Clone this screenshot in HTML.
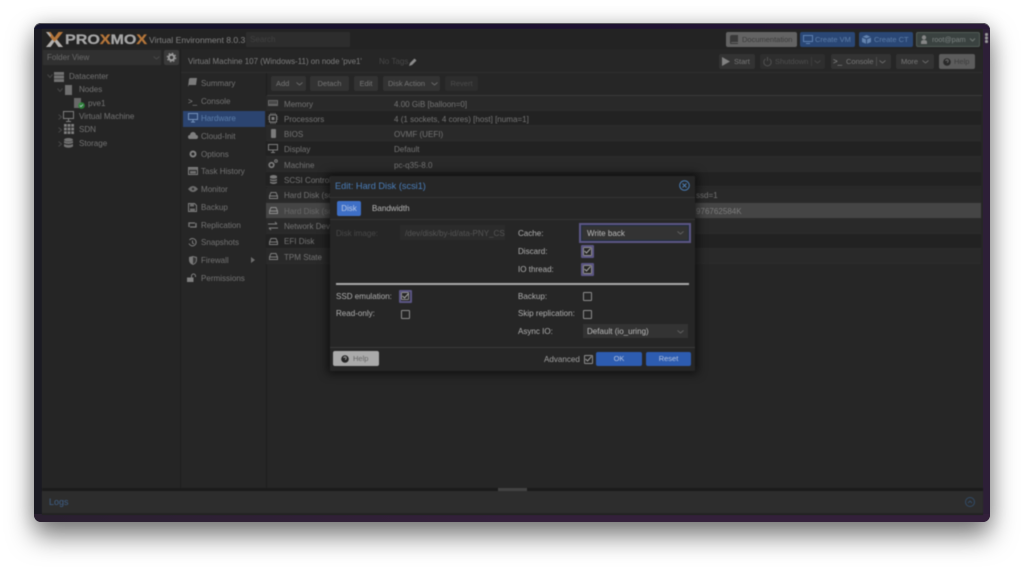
<!DOCTYPE html>
<html><head><meta charset="utf-8">
<style>
html,body{margin:0;padding:0;width:1024px;height:567px;overflow:hidden;background:#fff;font-family:"Liberation Sans",sans-serif}
#win{position:absolute;left:34px;top:23px;width:956px;height:499px;border-radius:7px;background:linear-gradient(90deg,#1a1a22,#211a2e 50%,#2d1f37);box-shadow:0 14px 26px 0 rgba(0,0,0,.5),0 0 18px rgba(0,0,0,.16)}
#wb{position:absolute;left:34px;top:23px;width:956px;height:499px;border-radius:7px;overflow:hidden;background:linear-gradient(90deg,#13132a,#1c1030 50%,#2a1a38) top/100% 6px no-repeat,linear-gradient(90deg,#2a2030,#33203a 50%,#33203a) bottom/100% 8px no-repeat;box-shadow:inset 0 1px 0 #5a5a5e}
#in{position:absolute;left:42px;top:29px;width:941px;height:486px;background:#262626}
#p{position:absolute;left:0;top:0;width:1024px;height:567px;filter:blur(.45px)}
.t{position:absolute;white-space:nowrap;font-size:8.05px;line-height:12px;color:#747474;margin-top:1px}
.b{position:absolute;border-radius:2px;background:#333;color:#777;font-size:7.5px;line-height:15px;white-space:nowrap;text-align:center}
.r{position:absolute;left:266px;width:715px;height:15.3px;border-bottom:1px solid #2c2c2c;box-sizing:border-box}
svg{position:absolute;overflow:visible;opacity:.88}
.ck{position:absolute;width:6.5px;height:6.500px;border:1px solid #8d8d8d;border-radius:1px}
.hl{position:absolute;border:2px solid #5c5685;border-radius:1px;width:9px;height:9px}
</style></head><body>
<div id="win"></div><div id="wb"></div><div id="in"></div>
<div id="p">
<!-- header -->
<div style="position:absolute;left:42px;top:29px;width:940px;height:20px;background:#232323"></div>
<svg style="left:45px;top:31px;opacity:1" width="19" height="17" viewBox="0 0 19 17"><path d="M1 1h4.500l4 5.500 4-5.500H18l-6 7.500 6 7.500h-4.500l-4-5.500-4 5.500H1l6-7.500z" fill="#b5763a"/><path d="M1 16h4.500l4-5.500-2.300-2zM18 16h-4.500l-4-5.500 2.300-2zM1 1h2.500L6 4.500 5 6z" fill="#b0b0b0"/></svg>
<div class="t" style="left:65px;top:31px;font-size:13.500px;line-height:16px;font-weight:bold;-webkit-text-stroke:.25px;color:#a6a6a6;transform:scaleX(1.19);transform-origin:left">PRO<span style="color:#b5763a">X</span>MO<span style="color:#b5763a">X</span></div>
<div class="t" style="left:149px;top:33px;font-size:8.600px;color:#828282">Virtual Environment 8.0.3</div>
<div style="position:absolute;left:246px;top:32px;width:104px;height:15px;background:#2d2d2d;border-radius:1px"></div>
<div class="t" style="left:250px;top:33px;color:#414141">Search</div>
<div class="b" style="left:726px;top:32px;width:71px;height:15px;background:#636363;color:#3b3b3b;text-align:left;text-indent:16px;font-size:7.500px">Documentation</div>
<svg style="left:730px;top:35px" width="8" height="9"><path d="M2 0h6v7H2q-1 0-1 1h7v1H1Q0 9 0 8V2q0-2 2-2z" fill="#333"/></svg>
<div class="b" style="left:800px;top:32px;width:55px;height:15px;background:#2a4775;color:#5c7da8;text-align:left;text-indent:15px;font-size:7.500px">Create VM</div>
<svg style="left:803px;top:35px" width="10" height="9"><path d="M.5.500h9v6h-9zM3 8.500h4" stroke="#6488b8" fill="none"/></svg>
<div class="b" style="left:859px;top:32px;width:54px;height:15px;background:#2a4775;color:#5c7da8;text-align:left;text-indent:15px;font-size:7.500px">Create CT</div>
<svg style="left:862px;top:35px" width="9" height="9"><path d="M4.500 0 9 2v5L4.500 9 0 7V2z" fill="#6b8cb8"/><path d="M0 2l4.500 2L9 2M4.500 4v5" stroke="#2a4775" fill="none"/></svg>
<div class="b" style="left:916px;top:32px;width:64px;height:15px;background:#3a4240;border:1px solid #505a56;box-sizing:border-box;color:#7b8280;text-align:left;text-indent:15px;line-height:13px;font-size:7.200px">root@pam</div>
<svg style="left:920px;top:35px" width="8" height="9"><circle cx="4" cy="2.500" r="2.200" fill="#909090"/><path d="M1 9V7q0-2 3-2t3 2v2z" fill="#909090"/></svg>
<svg style="left:969px;top:38px" width="7" height="4"><path d="M1 .500l2.500 2.500L6 .500" stroke="#767e7a" fill="none"/></svg>
<div style="position:absolute;left:985px;top:33px;width:3px;height:2.500px;background:#999;box-shadow:0 3.500px #999,0 7px #999;border-radius:1px"></div>

<!-- left tree -->
<div style="position:absolute;left:42px;top:49px;width:138px;height:441px;background:#252525"></div>
<div style="position:absolute;left:180px;top:49px;width:1px;height:441px;background:#1e1e1e"></div>
<div style="position:absolute;left:43px;top:50px;width:118px;height:15px;background:#303030"></div>
<div class="t" style="left:47px;top:51px;color:#6a6a6a">Folder View</div>
<svg style="left:153px;top:56px" width="7" height="4"><path d="M.5.500 3.500 3l3-2.500" stroke="#4c4c4c" fill="none"/></svg>
<div class="b" style="left:164px;top:50px;width:15px;height:15px;background:#3a3a3a"></div>
<svg style="left:167px;top:53px" width="9" height="9"><circle cx="4.500" cy="4.500" r="2.700" fill="none" stroke="#aaa" stroke-width="2"/><circle cx="4.500" cy="4.500" r="4.300" fill="none" stroke="#aaa" stroke-width="1" stroke-dasharray="1.700 1.700"/></svg>

<svg style="left:47px;top:74px" width="6" height="5"><path d="M.5.500 3 3.500 5.500.500" stroke="#4c4c4c" fill="none"/></svg>
<svg style="left:54px;top:72px" width="10" height="10"><path d="M0 0h10v3H0zM0 3.500h10v3H0zM0 7h10v3H0z" fill="#7c7c7c"/></svg>
<div class="t" style="left:69px;top:70px">Datacenter</div>
<svg style="left:57px;top:88px" width="6" height="5"><path d="M.5.500 3 3.500 5.500.500" stroke="#4c4c4c" fill="none"/></svg>
<div style="position:absolute;left:65px;top:85px;width:7px;height:10px;background:#707070"></div>
<div class="t" style="left:79px;top:83px">Nodes</div>
<div style="position:absolute;left:74px;top:98px;width:7px;height:10px;background:#686868"></div>
<svg style="left:78px;top:102px" width="7" height="7"><circle cx="3.500" cy="3.500" r="3.300" fill="#2f8a3a"/><path d="M2 3.500l1 1 2-2" stroke="#cde" fill="none" stroke-width=".8"/></svg>
<div class="t" style="left:88px;top:97px">pve1</div>
<svg style="left:58px;top:114px" width="5" height="6"><path d="M.5.500 3.500 3 .5 5.500" stroke="#4c4c4c" fill="none"/></svg>
<svg style="left:63px;top:111px" width="12" height="11"><path d="M.5.500h10v7H.5z" stroke="#8a8a8a" fill="none"/><path d="M3 10h5v1H3z" fill="#8a8a8a"/><path d="M5 8h1v2H5z" fill="#8a8a8a"/></svg>
<div class="t" style="left:79px;top:110px">Virtual Machine</div>
<svg style="left:58px;top:127px" width="5" height="6"><path d="M.5.500 3.500 3 .5 5.500" stroke="#4c4c4c" fill="none"/></svg>
<svg style="left:64px;top:124px" width="10" height="10"><path d="M0 0h2.800v2.800H0zM3.600 0h2.800v2.800H3.600zM7.200 0H10v2.800H7.200zM0 3.600h2.800v2.800H0zM3.600 3.600h2.800v2.800H3.600zM7.200 3.600H10v2.800H7.200zM0 7.200h2.800V10H0zM3.600 7.200h2.800V10H3.600zM7.200 7.200H10V10H7.200z" fill="#8c8c8c"/></svg>
<div class="t" style="left:79px;top:123px">SDN</div>
<svg style="left:58px;top:141px" width="5" height="6"><path d="M.5.500 3.500 3 .5 5.500" stroke="#4c4c4c" fill="none"/></svg>
<svg style="left:64px;top:138px" width="9" height="11"><ellipse cx="4.500" cy="1.800" rx="4.500" ry="1.800" fill="#7c7c7c"/><path d="M0 3q4.500 2 9 0v2q-4.500 2-9 0zM0 6q4.500 2 9 0v2.500q-4.500 2.500-9 0z" fill="#7c7c7c"/></svg>
<div class="t" style="left:79px;top:137px">Storage</div>

<!-- title bar -->
<div class="t" style="left:188px;top:55px;color:#7e7e7e;font-size:7.950px">Virtual Machine 107 (Windows-11) on node 'pve1'</div>
<div class="t" style="left:379px;top:55px;color:#484848">No Tags</div>
<svg style="left:409px;top:58px" width="8" height="8"><path d="M0 8l1-3L5.500.5l2 2L3 7z" fill="#9a9a9a"/></svg>
<div style="position:absolute;left:181px;top:72px;width:801px;height:1px;background:#303030"></div>
<div class="b" style="left:719px;top:54px;width:36px;height:15px;text-align:left;text-indent:15px">Start</div>
<svg style="left:722px;top:57px" width="8" height="9"><path d="M0 0l8 4.500L0 9z" fill="#8c8c8c"/></svg>
<div class="b" style="left:760px;top:54px;width:65px;height:15px;background:#2e2e2e;color:#4e4e4e;text-align:left;text-indent:15px">Shutdown</div>
<svg style="left:763px;top:57px" width="9" height="9"><path d="M2.500 2a3.700 3.700 0 1 0 4 0M4.500 0v4" stroke="#555" fill="none"/></svg>
<div style="position:absolute;left:811px;top:57px;width:1px;height:9px;background:#3c3c3c"></div>
<svg style="left:814px;top:60px" width="7" height="4"><path d="M.5.500l3 2.500 3-2.500" stroke="#4a4a4a" fill="none"/></svg>
<div class="b" style="left:831px;top:54px;width:60px;height:15px;text-align:left;text-indent:15px">Console</div>
<div class="t" style="left:833px;top:55px;font-size:8px;color:#909090">&gt;_</div>
<div style="position:absolute;left:876px;top:57px;width:1px;height:9px;background:#4d4d4d"></div>
<svg style="left:879px;top:60px" width="7" height="4"><path d="M.5.500l3 2.500 3-2.500" stroke="#707070" fill="none"/></svg>
<div class="b" style="left:896px;top:54px;width:38px;height:15px;text-align:left;text-indent:5px">More</div>
<svg style="left:922px;top:60px" width="7" height="4"><path d="M.5.500l3 2.500 3-2.500" stroke="#707070" fill="none"/></svg>
<div class="b" style="left:939px;top:54px;width:36px;height:15px;background:#5c5c5c;color:#3d3d3d;text-align:left;text-indent:15px">Help</div>
<svg style="left:943px;top:58px" width="8" height="8"><circle cx="4" cy="4" r="3.800" fill="#222"/><path d="M2.800 3q0-1.200 1.200-1.200T5.200 3 4 4.500" stroke="#777" fill="none" stroke-width=".8"/></svg>

<!-- nav -->
<div style="position:absolute;left:266px;top:73px;width:1px;height:417px;background:#1f1f1f"></div>
<div style="position:absolute;left:183px;top:111px;width:82px;height:16px;background:#2b4470"></div>
<div class="t" style="left:201px;top:77px">Summary</div>
<div class="t" style="left:201px;top:95px">Console</div>
<div class="t" style="left:201px;top:112px;color:#5c7eaa">Hardware</div>
<div class="t" style="left:201px;top:130px">Cloud-Init</div>
<div class="t" style="left:201px;top:148px">Options</div>
<div class="t" style="left:201px;top:165px">Task History</div>
<div class="t" style="left:201px;top:183px">Monitor</div>
<div class="t" style="left:201px;top:201px">Backup</div>
<div class="t" style="left:201px;top:219px">Replication</div>
<div class="t" style="left:201px;top:236px">Snapshots</div>
<div class="t" style="left:201px;top:254px">Firewall</div>
<div class="t" style="left:201px;top:272px">Permissions</div>
<svg style="left:188px;top:78px" width="9" height="9"><path d="M2 0h7L8 7H1L0 9h7L6 9H0L1 1z" fill="#888"/></svg>
<div class="t" style="left:188px;top:95px;font-size:8px;color:#8c8c8c">&gt;_</div>
<svg style="left:188px;top:113px" width="10" height="10"><path d="M.5.500h9v6h-9zM3 9h4M5 7v2" stroke="#7e9cc4" fill="none"/></svg>
<svg style="left:188px;top:132px" width="10" height="7"><path d="M2 7a2 2 0 0 1 0-4 3 3 0 0 1 6 0 2 2 0 0 1 0 4z" fill="#8c8c8c"/></svg>
<svg style="left:189px;top:150px" width="8" height="8"><circle cx="4" cy="4" r="2.500" fill="none" stroke="#8c8c8c" stroke-width="2"/></svg>
<svg style="left:188px;top:167px" width="10" height="8"><path d="M.5.500h9v7h-9z" fill="none" stroke="#8c8c8c"/><path d="M1 1h8v2H1zM2 4h6v2.500H2z" fill="#7c7c7c"/></svg>
<svg style="left:188px;top:186px" width="10" height="6"><path d="M0 3q5-6 10 0-5 6-10 0z" fill="#777"/><circle cx="5" cy="3" r="1.200" fill="#333"/></svg>
<svg style="left:188px;top:203px" width="9" height="9"><path d="M.5.500h6l2 2v6h-8z" fill="none" stroke="#8c8c8c"/><path d="M2 .5h4v3H2zM2 5.500h5v3H2z" fill="#777"/></svg>
<svg style="left:187px;top:221px" width="11" height="8"><path d="M2 6V2h6M9 2v4H3" stroke="#888" stroke-width="1.300" fill="none"/></svg>
<svg style="left:188px;top:238px" width="9" height="9"><path d="M1.500 2A3.700 3.700 0 1 1 1 5.500M4.500 2.500v2.500l1.500 1" stroke="#8c8c8c" fill="none"/></svg>
<svg style="left:189px;top:256px" width="8" height="9"><path d="M0 1l4-1 4 1v3q0 3.500-4 5-4-1.500-4-5z" fill="#868686"/><path d="M4 1v7q3-1.200 3-4V2z" fill="#3a3a3a"/></svg>
<svg style="left:251px;top:257px" width="4" height="6"><path d="M0 0l4 3-4 3z" fill="#777"/></svg>
<svg style="left:187px;top:274px" width="10" height="8"><rect x="0" y="3.500" width="6.500" height="4.500" fill="#8c8c8c"/><path d="M4.500 3.500V2a2 2 0 0 1 4 0v1" stroke="#8c8c8c" fill="none"/></svg>

<!-- toolbar -->
<div style="position:absolute;left:267px;top:95px;width:715px;height:1px;background:#393939"></div>
<div class="b" style="left:271px;top:76px;width:35px;height:15px;text-align:left;text-indent:5px">Add</div>
<svg style="left:296px;top:82px" width="7" height="4"><path d="M.5.500l3 2.500 3-2.500" stroke="#707070" fill="none"/></svg>
<div class="b" style="left:310px;top:76px;width:39px;height:15px">Detach</div>
<div class="b" style="left:354px;top:76px;width:24px;height:15px">Edit</div>
<div class="b" style="left:383px;top:76px;width:57px;height:15px;text-align:left;text-indent:5px">Disk Action</div>
<svg style="left:431px;top:82px" width="7" height="4"><path d="M.5.500l3 2.500 3-2.500" stroke="#707070" fill="none"/></svg>
<div class="b" style="left:445px;top:76px;width:33px;height:15px;background:#2d2d2d;color:#4c4c4c">Revert</div>

<!-- table rows -->
<div class="r" style="top:96px;background:#292929"></div>
<div class="r" style="top:111px;background:#222"></div>
<div class="r" style="top:126px;background:#292929"></div>
<div class="r" style="top:142px;background:#222"></div>
<div class="r" style="top:157px;background:#292929"></div>
<div class="r" style="top:172px;background:#222"></div>
<div class="r" style="top:188px;background:#292929"></div>
<div class="r" style="top:203px;height:16px;background:#454545"></div>
<div class="r" style="top:219px;background:#292929"></div>
<div class="r" style="top:234px;background:#222"></div>
<div class="r" style="top:249px;background:#292929"></div>
<div class="t" style="left:284px;top:98px">Memory</div>
<div class="t" style="left:284px;top:113px">Processors</div>
<div class="t" style="left:284px;top:128px">BIOS</div>
<div class="t" style="left:284px;top:143px">Display</div>
<div class="t" style="left:284px;top:159px">Machine</div>
<div class="t" style="left:284px;top:174px">SCSI Controller</div>
<div class="t" style="left:284px;top:189px">Hard Disk (scsi0)</div>
<div class="t" style="left:284px;top:205px;color:#686868">Hard Disk (scsi1)</div>
<div class="t" style="left:284px;top:220px">Network Device</div>
<div class="t" style="left:284px;top:235px">EFI Disk</div>
<div class="t" style="left:284px;top:251px">TPM State</div>
<div class="t" style="left:394px;top:98px">4.00 GiB [balloon=0]</div>
<div class="t" style="left:394px;top:113px">4 (1 sockets, 4 cores) [host] [numa=1]</div>
<div class="t" style="left:394px;top:128px">OVMF (UEFI)</div>
<div class="t" style="left:394px;top:143px">Default</div>
<div class="t" style="left:394px;top:159px">pc-q35-8.0</div>
<div class="t" style="left:696px;top:189px">ssd=1</div>
<div class="t" style="left:696px;top:205px;color:#7c7c7c">976762584K</div>
<svg style="left:268px;top:100px" width="10" height="6"><path d="M0 0h10v6H0z" fill="#6e6e6e"/><path d="M2 1v3M4 1v3M6 1v3M8 1v3" stroke="#2b2b2b"/></svg>
<svg style="left:268px;top:113px" width="10" height="11"><rect x="1.500" y="2" width="7" height="7" fill="none" stroke="#888"/><rect x="3.500" y="4" width="3" height="3" fill="#888"/><path d="M3 0v2M5 0v2M7 0v2M3 9v2M5 9v2M7 9v2M0 4h1M0 6h1M9 4h1M9 6h1" stroke="#777"/></svg>
<div style="position:absolute;left:271px;top:129px;width:5px;height:9px;background:#7c7c7c;border-radius:1px"></div>
<svg style="left:268px;top:144px" width="10" height="9"><path d="M.5.500h9v5.500h-9zM3 8.500h4M5 6v2" stroke="#8a8a8a" fill="none"/></svg>
<svg style="left:268px;top:159px" width="10" height="10"><circle cx="3.500" cy="6" r="2.300" fill="none" stroke="#8a8a8a" stroke-width="1.600"/><circle cx="8" cy="2" r="1.300" fill="none" stroke="#8a8a8a"/></svg>
<svg style="left:270px;top:175px" width="7" height="9"><path d="M0 1q3.500-2 7 0v7q-3.500 2-7 0z" fill="#868686"/><path d="M0 3.500q3.500 1.500 7 0M0 6q3.500 1.500 7 0" stroke="#2a2a2a" fill="none"/></svg>
<svg style="left:269px;top:192px" width="9" height="7"><path d="M.5 4 2 .5h5L8.500 4v2.500h-8zM.5 4h8" stroke="#8a8a8a" fill="none"/></svg>
<svg style="left:269px;top:207px" width="9" height="7"><path d="M.5 4 2 .5h5L8.500 4v2.500h-8zM.5 4h8" stroke="#9a9a9a" fill="none"/></svg>
<svg style="left:268px;top:222px" width="10" height="8"><path d="M0 2h9M7 0l2 2M10 6H1M3 8 1 6" stroke="#8a8a8a" fill="none"/></svg>
<svg style="left:269px;top:238px" width="9" height="7"><path d="M.5 4 2 .5h5L8.500 4v2.500h-8zM.5 4h8" stroke="#8a8a8a" fill="none"/></svg>
<svg style="left:269px;top:253px" width="9" height="7"><path d="M.5 4 2 .5h5L8.500 4v2.500h-8zM.5 4h8" stroke="#8a8a8a" fill="none"/></svg>

<!-- logs -->
<div style="position:absolute;left:42px;top:488px;width:941px;height:3px;background:#1b1b1b"></div>
<div style="position:absolute;left:498px;top:488px;width:29px;height:3px;background:#424242"></div>
<div style="position:absolute;left:42px;top:491px;width:941px;height:24px;background:#2d2d2d;border-bottom:2px solid #232323;box-sizing:border-box"></div>
<div class="t" style="left:49px;top:495px;font-size:9px;color:#3f5f87">Logs</div>
<svg style="left:965px;top:497px" width="10" height="10"><circle cx="5" cy="5" r="4.500" fill="none" stroke="#33506f"/><path d="M3 6l2-2 2 2" fill="none" stroke="#33506f"/></svg>

<!-- dialog -->
<div style="position:absolute;left:330px;top:176px;width:365px;height:195px;background:#262626;box-shadow:0 0 9px 3px rgba(0,0,0,.55);border-radius:1px"></div>
<div class="t" style="left:335px;top:179px;font-size:9.200px;color:#4a7db8">Edit: Hard Disk (scsi1)</div>
<svg style="left:679px;top:180px" width="11" height="11"><circle cx="5.500" cy="5.500" r="4.800" fill="none" stroke="#4f8ac9"/><path d="M3.500 3.500l4 4M7.500 3.500l-4 4" stroke="#4f8ac9"/></svg>
<div style="position:absolute;left:330px;top:197px;width:365px;height:1px;background:#343434"></div>
<div style="position:absolute;left:330px;top:219px;width:365px;height:1px;background:#343434"></div>
<div class="b" style="left:337px;top:201px;width:24px;height:15px;background:#3e6fc6;color:#b9c8e6;font-size:8px">Disk</div>
<div class="t" style="left:372px;top:202px;color:#b8b8b8">Bandwidth</div>

<div class="t" style="left:336px;top:227px;color:#484848">Disk image:</div>
<div style="position:absolute;left:400px;top:225px;width:105px;height:15px;background:#2b2b2b;overflow:hidden"><div class="t" style="left:5px;top:2px;color:#555">/dev/disk/by-id/ata-PNY_CS900</div></div>

<div class="t" style="left:518px;top:227px;color:#b0b0b0">Cache:</div>
<div style="position:absolute;left:579px;top:223px;width:112px;height:20px;box-sizing:border-box;border:2px solid #5c5685;background:#1f2c3e;padding:1px"><div style="width:100%;height:100%;background:#333"></div></div>
<div class="t" style="left:587px;top:227px;color:#bcbcbc">Write back</div>
<svg style="left:677px;top:231px" width="7" height="4"><path d="M.5.500l3 2.500 3-2.500" stroke="#666" fill="none"/></svg>
<div class="t" style="left:518px;top:245px;color:#b0b0b0">Discard:</div>
<div class="t" style="left:518px;top:263px;color:#b0b0b0">IO thread:</div>
<div class="hl" style="left:581px;top:245px"></div><div class="ck" style="left:583px;top:247px"></div>
<svg style="left:584px;top:248px" width="7" height="6"><path d="M.5 3l2 2L6.500.5" stroke="#b8b8b8" fill="none"/></svg>
<div class="hl" style="left:581px;top:263px"></div><div class="ck" style="left:583px;top:265px"></div>
<svg style="left:584px;top:266px" width="7" height="6"><path d="M.5 3l2 2L6.500.5" stroke="#b8b8b8" fill="none"/></svg>

<div style="position:absolute;left:336px;top:283px;width:353px;height:2px;background:#a9a9a9"></div>

<div class="t" style="left:336px;top:290px;color:#b0b0b0">SSD emulation:</div>
<div class="hl" style="left:398.500px;top:289.500px"></div><div class="ck" style="left:400.500px;top:291.500px"></div>
<svg style="left:401.500px;top:292.500px" width="7" height="6"><path d="M.5 3l2 2L6.500.5" stroke="#b8b8b8" fill="none"/></svg>
<div class="t" style="left:336px;top:307px;color:#b0b0b0">Read-only:</div>
<div class="ck" style="left:401px;top:310px"></div>
<div class="t" style="left:518px;top:290px;color:#b0b0b0">Backup:</div>
<div class="ck" style="left:583px;top:292px"></div>
<div class="t" style="left:518px;top:307px;color:#b0b0b0">Skip replication:</div>
<div class="ck" style="left:583px;top:310px"></div>
<div class="t" style="left:518px;top:325px;color:#b0b0b0">Async IO:</div>
<div style="position:absolute;left:583px;top:324px;width:105px;height:14px;background:#333"></div>
<div class="t" style="left:587px;top:325px;color:#bcbcbc">Default (io_uring)</div>
<svg style="left:677px;top:330px" width="7" height="4"><path d="M.5.500l3 2.500 3-2.500" stroke="#666" fill="none"/></svg>

<div style="position:absolute;left:330px;top:347px;width:365px;height:1px;background:#3a3a3a"></div>
<div class="b" style="left:333px;top:351px;width:46px;height:15px;background:#aaa;color:#666;text-align:left;text-indent:20px">Help</div>
<svg style="left:341px;top:355px;opacity:1" width="8" height="8"><circle cx="4" cy="4" r="3.800" fill="#262626"/><path d="M2.800 3q0-1.200 1.200-1.200T5.200 3 4 4.500" stroke="#aaa" fill="none" stroke-width=".8"/></svg>
<div class="t" style="left:544px;top:353px;color:#a0a0a0">Advanced</div>
<div class="ck" style="left:584px;top:355px"></div>
<svg style="left:585px;top:356px" width="7" height="6"><path d="M.5 3l2 2L6.500.5" stroke="#a8a8a8" fill="none"/></svg>
<div class="b" style="left:596px;top:352px;width:46px;height:14px;background:#2d5cb0;color:#b3c2df;line-height:14px">OK</div>
<div class="b" style="left:646px;top:352px;width:45px;height:14px;background:#2d5cb0;color:#b3c2df;line-height:14px">Reset</div>
</div>
</body></html>
